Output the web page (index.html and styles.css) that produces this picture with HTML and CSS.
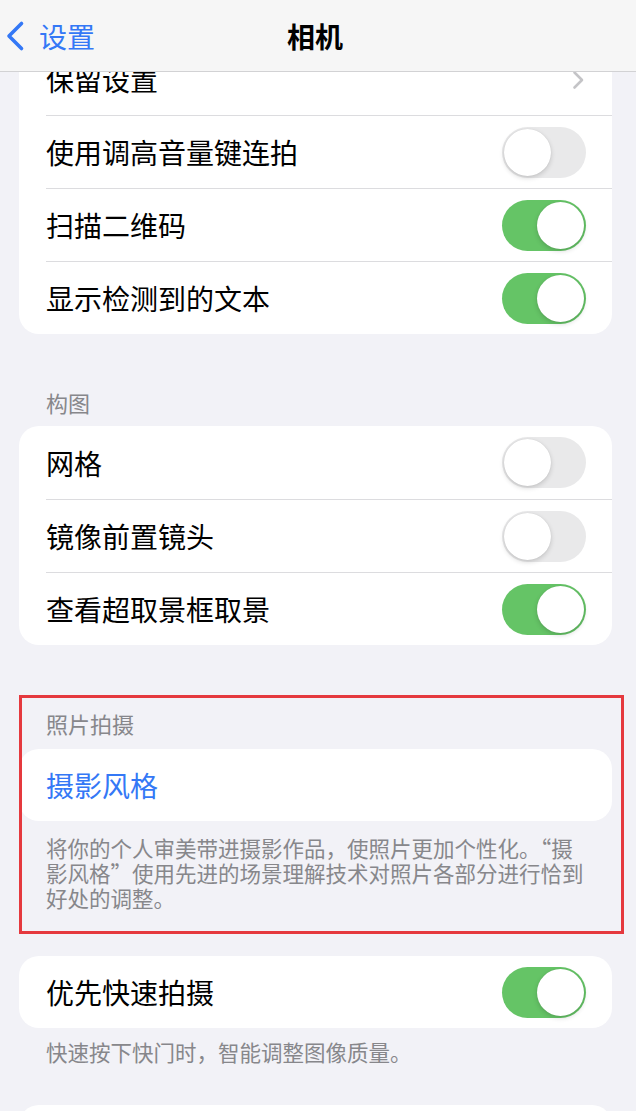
FILE: index.html
```html
<!DOCTYPE html>
<html lang="zh-CN">
<head>
    <meta charset="UTF-8">
    <meta name="viewport" content="width=device-width, initial-scale=1.0">
    <title>相机</title>
    <link rel="stylesheet" href="styles.css">
</head>
<body>
    <header class="nav">
        <a class="nav-back" href="#">
            <svg width="22" height="32" viewBox="0 0 22 32" aria-hidden="true">
                <path d="M17.5 3.5 L5 16 L17.5 28.5" fill="none" stroke="#3478f6" stroke-width="3.6" stroke-linecap="round" stroke-linejoin="round"/>
            </svg>
            <span>设置</span>
        </a>
        <h1 class="nav-title">相机</h1>
        <div></div>
    </header>

    <main class="settings">
        <div class="card">
            <div class="row">
                <div class="row-inner first">
                    <span class="label">保留设置</span>
                    <svg class="chevron" width="13" height="20" viewBox="0 0 13 20" aria-hidden="true">
                        <path d="M2.5 2.5 L10 10 L2.5 17.5" fill="none" stroke="#c4c4c7" stroke-width="2.6" stroke-linecap="round" stroke-linejoin="round"/>
                    </svg>
                </div>
            </div>
            <div class="row">
                <div class="row-inner">
                    <span class="label">使用调高音量键连拍</span>
                    <span class="switch"></span>
                </div>
            </div>
            <div class="row">
                <div class="row-inner">
                    <span class="label">扫描二维码</span>
                    <span class="switch on"></span>
                </div>
            </div>
            <div class="row">
                <div class="row-inner">
                    <span class="label">显示检测到的文本</span>
                    <span class="switch on"></span>
                </div>
            </div>
        </div>

        <h2 class="group-title spaced">构图</h2>
        <div class="card">
            <div class="row">
                <div class="row-inner first">
                    <span class="label">网格</span>
                    <span class="switch"></span>
                </div>
            </div>
            <div class="row">
                <div class="row-inner">
                    <span class="label">镜像前置镜头</span>
                    <span class="switch"></span>
                </div>
            </div>
            <div class="row">
                <div class="row-inner">
                    <span class="label">查看超取景框取景</span>
                    <span class="switch on"></span>
                </div>
            </div>
        </div>

        <section class="highlight">
            <h2 class="group-title">照片拍摄</h2>
            <div class="card">
                <div class="row">
                    <div class="row-inner first">
                        <span class="label link">摄影风格</span>
                    </div>
                </div>
            </div>
            <p class="group-note wide">将你的个人审美带进摄影作品，使照片更加个性化。“摄<br>影风格”使用先进的场景理解技术对照片各部分进行恰到<br>好处的调整。</p>
        </section>

        <div class="card after-highlight">
            <div class="row">
                <div class="row-inner first">
                    <span class="label">优先快速拍摄</span>
                    <span class="switch on"></span>
                </div>
            </div>
        </div>
        <p class="group-note">快速按下快门时，智能调整图像质量。</p>

        <div class="card last"></div>
    </main>
</body>
</html>
```

FILE: styles.css
```css
:root {
    --page-bg: #f2f2f7;
    --nav-bg: #f6f6f6;
    --card-bg: #ffffff;
    --text: #000000;
    --muted: #87878b;
    --blue: #3478f6;
    --green: #65c466;
    --switch-off: #e9e9ea;
    --separator: #dcdcdf;
    --highlight: #e5393e;
}

* {
    box-sizing: border-box;
}

body {
    margin: 0;
    height: 1111px;
    overflow: hidden;
    background-color: var(--page-bg);
    font-family: "Noto Sans CJK SC", "Noto Sans", sans-serif;
    color: var(--text);
}

/* top navigation bar, sits over the scrolled list */
.nav {
    position: relative;
    z-index: 2;
    display: grid;
    grid-template-columns: 1fr auto 1fr;
    align-items: center;
    height: 72px;
    padding-right: 6px;
    background-color: var(--nav-bg);
    border-bottom: 1px solid #d2d2d4;
}

.nav-back {
    display: flex;
    align-items: center;
    gap: 13px;
    margin-left: 4px;
    color: var(--blue);
    text-decoration: none;
    font-size: 28px;
    line-height: 1;
}

.nav-back svg {
    display: block;
}

.nav-title {
    margin: 0;
    font-size: 28px;
    font-weight: 700;
    line-height: 1;
}

.settings {
    margin-top: -30px;
    padding: 0 24px 0 19px;
}

.card {
    background-color: var(--card-bg);
    border-radius: 20px;
    overflow: hidden;
}

.row {
    padding-left: 27px;
}

.row-inner {
    display: flex;
    align-items: center;
    justify-content: space-between;
    height: 73px;
    padding-right: 26px;
    border-top: 1px solid var(--separator);
}

.row-inner.first {
    border-top: none;
}

.label {
    font-size: 28px;
    line-height: 1;
}

.label.link {
    color: var(--blue);
}

.chevron {
    display: block;
    margin-right: 1px;
    margin-top: 3px;
}

/* iOS style switch */
.switch {
    position: relative;
    flex: none;
    width: 84px;
    height: 51px;
    border-radius: 26px;
    background-color: var(--switch-off);
}

.switch::after {
    content: "";
    position: absolute;
    top: 2px;
    left: 2px;
    width: 47px;
    height: 47px;
    border-radius: 50%;
    background-color: #ffffff;
    box-shadow: 0 2px 5px rgba(0, 0, 0, 0.16), 0 0 1px rgba(0, 0, 0, 0.12);
}

.switch.on {
    background-color: var(--green);
}

.switch.on::after {
    left: 35px;
}

.group-title {
    margin: 0;
    padding: 15px 0 11px 27px;
    font-size: 22px;
    font-weight: 400;
    line-height: 26px;
    color: var(--muted);
}

.group-title.spaced {
    padding-top: 55px;
}

.group-note {
    margin: 14px 0 0;
    padding: 0 27px;
    font-size: 21.5px;
    line-height: 25px;
    color: var(--muted);
}

.group-note.wide {
    padding-right: 0;
    white-space: nowrap;
}

/* red annotation frame around the photo section */
.highlight {
    position: relative;
    margin-top: 50px;
    padding-bottom: 24px;
}

.highlight::after {
    content: "";
    position: absolute;
    top: 0;
    bottom: 0;
    left: 0;
    right: -12px;
    border: 3px solid var(--highlight);
    pointer-events: none;
}

.highlight .card .row-inner {
    height: 72px;
}

.highlight .card {
    margin-top: 2px;
}

.after-highlight {
    margin-top: 22px;
}

.after-highlight .row-inner {
    height: 72px;
}

.after-highlight + .group-note {
    margin-top: 11px;
    line-height: 26px;
}

.card.last {
    height: 40px;
    margin-top: 40px;
}
```
